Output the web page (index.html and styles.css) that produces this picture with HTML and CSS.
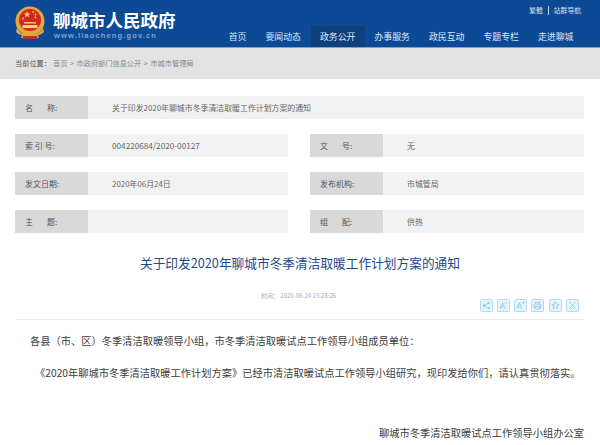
FILE: index.html
```html
<!DOCTYPE html>
<html lang="zh-CN">
<head>
<meta charset="utf-8">
<title>关于印发2020年聊城市冬季清洁取暖工作计划方案的通知</title>
<link rel="stylesheet" href="styles.css">
</head>
<body>
<header class="header">
  <div class="brand">
    <svg class="emblem" viewBox="0 0 30 34" aria-hidden="true">
      <circle cx="15" cy="15" r="14.5" fill="#e2a93f"/>
      <circle cx="15" cy="14" r="11" fill="#d5261f"/>
      <path d="M12 5l1 2.4 2.4.2-1.9 1.5.7 2.4-2.2-1.4-2.1 1.4.7-2.4-1.9-1.5 2.4-.2z" fill="#f4cf58"/>
      <circle cx="18" cy="6" r=".9" fill="#f4cf58"/><circle cx="20.5" cy="8.5" r=".9" fill="#f4cf58"/><circle cx="20.5" cy="11.5" r=".9" fill="#f4cf58"/><circle cx="8" cy="12.5" r=".9" fill="#f4cf58"/>
      <path d="M9 16h12v1.5H9zM7.5 19h15v3h-15z" fill="#f3d36c"/>
      <path d="M2 22c3 5 7 7 13 7s10-2 13-7l1 4c-2 2-4 3-6 3l1 3-9-1-9 1 1-3c-2 0-4-1-6-3z" fill="#e2a93f"/>
      <path d="M8 30h14v3H8z" fill="#cf2a20"/>
    </svg>
    <div class="brand-text">
      <div class="brand-name">聊城市人民政府</div>
      <div class="brand-url">www.liaocheng.gov.cn</div>
    </div>
  </div>
  <div class="header-right">
    <div class="toplinks"><span class="toplink-first">繁體</span><span>站群导航</span></div>
    <nav class="nav">
      <a class="nav-item home">首页</a>
      <a class="nav-item">要闻动态</a>
      <a class="nav-item active">政务公开</a>
      <a class="nav-item">办事服务</a>
      <a class="nav-item">政民互动</a>
      <a class="nav-item">专题专栏</a>
      <a class="nav-item">走进聊城</a>
    </nav>
  </div>
</header>
<div class="crumbs"><span class="crumb-label">当前位置：</span><span class="crumb-path">首页 &gt; 市政府部门信息公开 &gt; 市城市管理局</span></div>

<section class="meta">
  <div class="row wide"><div class="label"><span class="spread">名<i>称:</i></span></div><div class="value">关于印发2020年聊城市冬季清洁取暖工作计划方案的通知</div></div>
  <div class="row"><div class="label">索 引 号:</div><div class="value num">004220684/2020-00127</div></div>
  <div class="row"><div class="label"><span class="spread">文<i>号:</i></span></div><div class="value">无</div></div>
  <div class="row"><div class="label">发文日期:</div><div class="value">2020年06月24日</div></div>
  <div class="row"><div class="label">发布机构:</div><div class="value">市城管局</div></div>
  <div class="row"><div class="label"><span class="spread">主<i>题:</i></span></div><div class="value"></div></div>
  <div class="row"><div class="label"><span class="spread">组<i>配:</i></span></div><div class="value">供热</div></div>
</section>

<h1 class="title">关于印发2020年聊城市冬季清洁取暖工作计划方案的通知</h1>
<div class="time">时间： 2020-06-24 13:28:26</div>
<div class="tools">
  <span class="tool"><svg viewBox="0 0 13 13"><circle cx="9.2" cy="3.4" r="1.4"/><circle cx="9.2" cy="9.6" r="1.4"/><circle cx="3.6" cy="6.5" r="1.6"/><path class="ln" d="M9.2 3.4L3.6 6.5l5.6 3.1"/></svg></span>
  <span class="tool"><svg viewBox="0 0 13 13"><path class="ln" d="M2.5 10.5L5.5 3l3 7.5M3.6 8h3.8M8.5 3.5h2.5"/></svg></span>
  <span class="tool"><svg viewBox="0 0 13 13"><path class="ln" d="M2 10.5L5 3l3 7.5M3.1 8h3.8M8.5 3.5h3M10 2v3"/></svg></span>
  <span class="tool"><svg viewBox="0 0 13 13"><path class="ln" d="M4 4.5V2.5h5v2M4 9H2.5V4.8h8V9H9M4 7.5h5v3H4z"/></svg></span>
  <span class="tool"><svg viewBox="0 0 13 13"><path class="ln" d="M6.5 2.2l1.3 2.9 3 .3-2.3 2 .7 3-2.7-1.6-2.7 1.6.7-3-2.3-2 3-.3z"/></svg></span>
  <span class="tool"><svg viewBox="0 0 13 13"><path class="ln" d="M3 3l7 7M10 3l-7 7"/></svg></span>
</div>
<article class="article">
  <p class="p-first">各县（市、区）冬季清洁取暖领导小组，市冬季清洁取暖试点工作领导小组成员单位：</p>
  <p class="p-second">《2020年聊城市冬季清洁取暖工作计划方案》已经市清洁取暖试点工作领导小组研究，现印发给你们，请认真贯彻落实。</p>
  <p class="p-sign">聊城市冬季清洁取暖试点工作领导小组办公室</p>
</article>
</body>
</html>
```
FILE: styles.css
```css
html, body { margin: 0; padding: 0; }
html { overflow: hidden; }
body { width: 600px; height: 445px; overflow: hidden; background: #fff; font-family: "Noto Sans CJK SC", sans-serif; color: #555; }

.header { display: flex; justify-content: space-between; height: 47px; background: #0d4a96; border-bottom: 1px solid #7fa3d2; }
.brand { display: flex; padding: 6px 0 0 15px; gap: 8px; }
.emblem { width: 30px; height: 34px; }
.brand-text { display: flex; flex-direction: column; }
.brand-name { font-family: "Liberation Sans", "Noto Sans CJK SC", sans-serif; font-size: 17.5px; line-height: 20px; margin-top: 5px; font-weight: 700; color: #fff; white-space: nowrap; }
.brand-url { font-size: 7.5px; line-height: 9px; margin-left: 1px; font-weight: 700; letter-spacing: 1.15px; color: #7fa3cf; font-family: "Liberation Sans", sans-serif; white-space: nowrap; }

.header-right { display: flex; flex-direction: column; justify-content: space-between; }
.toplinks { display: flex; justify-content: flex-end; align-items: center; padding: 6px 19px 0 0; font-size: 6.8px; line-height: 9px; color: #d6e2f2; }
.toplink-first { padding-right: 5px; margin-right: 5px; border-right: 1px solid #c4d6ee; }
.nav { display: flex; padding-right: 17px; }
.nav-item { width: 54.5px; height: 21px; line-height: 22px; text-align: center; font-size: 8.9px; color: #dfe8f5; }
.nav-item.home { width: 37px; }
.nav-item.active { background: #0f3f7d; }

.crumbs { height: 31px; background: #e3e3e3; padding-left: 15px; font-size: 7.2px; line-height: 31px; }
.crumb-label { color: #555; }
.crumb-path { color: #888; margin-left: 2px; word-spacing: 1px; }

.meta { display: grid; grid-template-columns: 273px 274px; column-gap: 22px; row-gap: 15px; margin: 17px 0 0 15px; width: 569px; }
.row { display: flex; height: 23px; background: #f2f2f2; font-size: 8px; line-height: 23px; color: #666; }
.row.wide { grid-column: 1 / -1; }
.label { width: 63px; padding-left: 10px; background: #d9d9d9; color: #555; flex: none; }
.value { padding-left: 24px; font-size: 7.9px; white-space: nowrap; }
.value.num { font-size: 8.2px; }
.spread i { font-style: normal; margin-left: 14px; }

.title { margin: 21px 0 0; text-align: center; font-size: 12.7px; line-height: 18px; font-weight: 400; color: #1a4a8f; }
.time { margin-top: 19px; padding-left: 261px; font-size: 6px; line-height: 9px; color: #aaa; }

.tools { display: flex; justify-content: flex-end; gap: 4.3px; width: 579px; margin-top: -1.5px; }
.tool { width: 13px; height: 13px; box-sizing: border-box; background: #e6f3fb; border: 1px solid #b5dcf3; border-radius: 1.5px; }
.tool svg { display: block; width: 11px; height: 11px; fill: #8fcbee; }
.tool .ln { fill: none; stroke: #8fcbee; stroke-width: 1; }

.article { margin: 7px 16px 0 15px; border-top: 1px solid #eee; font-size: 10.25px; color: #3c3c3c; }
.article p { margin: 0; white-space: nowrap; line-height: 14px; }
.p-first { padding: 14px 0 0 15px; }
.p-second { padding: 18px 0 0 20px; }
.p-sign { padding-top: 46px; text-align: right; }
```
